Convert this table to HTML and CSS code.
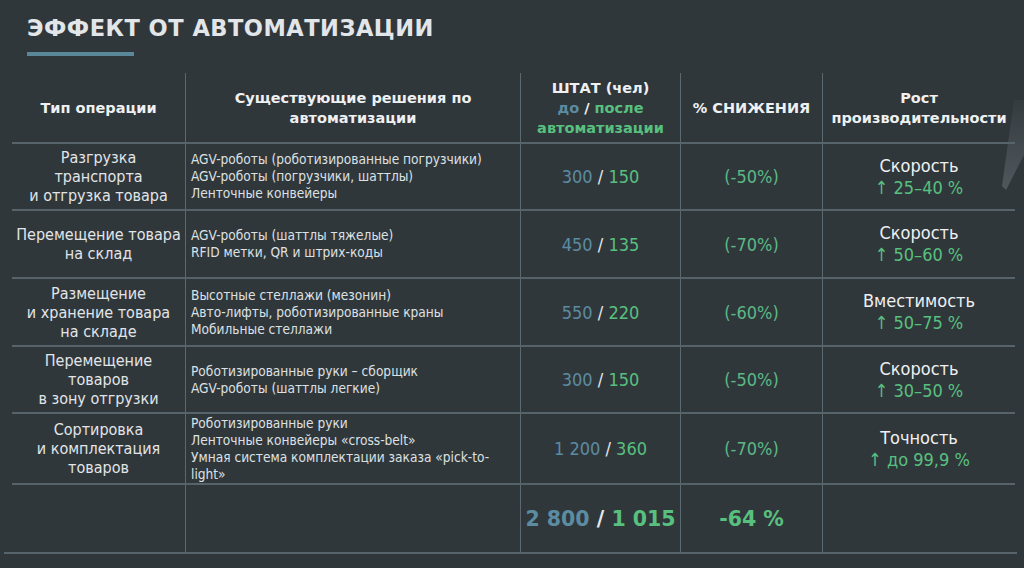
FILE: index.html
```html
<!DOCTYPE html>
<html lang="ru">
<head>
<meta charset="utf-8">
<title>Эффект от автоматизации</title>
<link rel="stylesheet" href="styles.css">
</head>
<body>
<div class="slide">
  <svg class="deco" width="24" height="100" viewBox="0 0 24 100"><defs><linearGradient id="g" x1="0" y1="0" x2="0" y2="1"><stop offset="0" stop-color="#5d666c" stop-opacity="0.1"/><stop offset="1" stop-color="#5d666c" stop-opacity="0.7"/></linearGradient></defs><polygon points="14,0 24,0 24,55 6,90 2,86" fill="url(#g)"/></svg>
  <header class="head">
    <h1 class="title">ЭФФЕКТ ОТ АВТОМАТИЗАЦИИ</h1>
    <div class="title-bar"></div>
  </header>
  <div class="table">
    <div class="cell th first"><div>Тип операции</div></div>
    <div class="cell th"><div>Существующие решения по<br>автоматизации</div></div>
    <div class="cell th"><div>ШТАТ (чел)<br><span class="blue">до</span> / <span class="green">после<br>автоматизации</span></div></div>
    <div class="cell th"><div>% СНИЖЕНИЯ</div></div>
    <div class="cell th"><div>Рост<br>производительности</div></div>

    <div class="cell op first row"><div>Разгрузка<br>транспорта<br>и отгрузка товара</div></div>
    <div class="cell sol row"><div>AGV-роботы (роботизированные погрузчики)<br>AGV-роботы (погрузчики, шаттлы)<br>Ленточные конвейеры</div></div>
    <div class="cell num row"><div><span class="blue">300</span> / <span class="green">150</span></div></div>
    <div class="cell pct row"><div>(-50%)</div></div>
    <div class="cell grow row"><div>Скорость<br><span class="green">↑ 25–40 %</span></div></div>

    <div class="cell op first row"><div>Перемещение товара<br>на склад</div></div>
    <div class="cell sol row"><div>AGV-роботы (шаттлы тяжелые)<br>RFID метки, QR и штрих-коды</div></div>
    <div class="cell num row"><div><span class="blue">450</span> / <span class="green">135</span></div></div>
    <div class="cell pct row"><div>(-70%)</div></div>
    <div class="cell grow row"><div>Скорость<br><span class="green">↑ 50–60 %</span></div></div>

    <div class="cell op first row"><div>Размещение<br>и хранение товара<br>на складе</div></div>
    <div class="cell sol row"><div>Высотные стеллажи (мезонин)<br>Авто-лифты, роботизированные краны<br>Мобильные стеллажи</div></div>
    <div class="cell num row"><div><span class="blue">550</span> / <span class="green">220</span></div></div>
    <div class="cell pct row"><div>(-60%)</div></div>
    <div class="cell grow row"><div>Вместимость<br><span class="green">↑ 50–75 %</span></div></div>

    <div class="cell op first row"><div>Перемещение<br>товаров<br>в зону отгрузки</div></div>
    <div class="cell sol row"><div>Роботизированные руки – сборщик<br>AGV-роботы (шаттлы легкие)</div></div>
    <div class="cell num row"><div><span class="blue">300</span> / <span class="green">150</span></div></div>
    <div class="cell pct row"><div>(-50%)</div></div>
    <div class="cell grow row"><div>Скорость<br><span class="green">↑ 30–50 %</span></div></div>

    <div class="cell op first row"><div>Сортировка<br>и комплектация<br>товаров</div></div>
    <div class="cell sol row"><div>Роботизированные руки<br>Ленточные конвейеры «cross-belt»<br>Умная система комплектации заказа «pick-to-<br>light»</div></div>
    <div class="cell num row"><div><span class="blue">1 200</span> / <span class="green">360</span></div></div>
    <div class="cell pct row"><div>(-70%)</div></div>
    <div class="cell grow row"><div>Точность<br><span class="green">↑ до 99,9 %</span></div></div>

    <div class="cell first row"></div>
    <div class="cell row"></div>
    <div class="cell total row"><div><span class="blue">2 800</span> / <span class="green">1 015</span></div></div>
    <div class="cell total row"><div><span class="green">-64 %</span></div></div>
    <div class="cell row"></div>
  </div>
  <div class="bottom-rule"></div>
</div>
</body>
</html>
```

FILE: styles.css
```css
html, body {
  margin: 0;
  padding: 0;
  background: #30373b;
}
.slide {
  position: relative;
  width: 1024px;
  height: 568px;
  overflow: hidden;
  background: #30373b;
  color: #e6e9eb;
  font-family: "DejaVu Sans", Verdana, sans-serif;
}
.deco {
  position: absolute;
  right: 0;
  top: 100px;
}
.head {
  padding: 13px 0 0 27px;
  height: 62px;
  box-sizing: border-box;
}
.title {
  margin: 0;
  font-size: 22.5px;
  line-height: 30px;
  font-weight: bold;
  letter-spacing: 0.5px;
  color: #e3e6e9;
}
.title-bar {
  width: 107px;
  height: 4px;
  margin-top: 9px;
  background: #5a8799;
}
.table {
  position: relative;
  margin: 11px 0 0 12px;
  display: grid;
  grid-template-columns: 173px 335px 160px 142px 193px;
  grid-template-rows: 69px 67px 68px 68px 67px 71px 69px;
}
.cell {
  border-left: 1px solid #5b6870;
  display: flex;
  justify-content: center;
  align-items: center;
  text-align: center;
  box-sizing: border-box;
}
.cell.first {
  border-left: none;
}
.cell.row {
  border-top: 2px solid #56636b;
}
.th {
  font-weight: bold;
  font-size: 14.5px;
  line-height: 20px;
  color: #eef0f2;
}
.op {
  font-family: "DejaVu Sans Condensed", "DejaVu Sans", sans-serif;
  font-size: 16px;
  line-height: 19px;
  color: #e2e5e8;
}
.sol {
  justify-content: flex-start;
  text-align: left;
  padding-left: 5px;
  font-family: "DejaVu Sans Condensed", "DejaVu Sans", sans-serif;
  font-size: 13.6px;
  line-height: 17px;
  color: #dde1e4;
}
.num, .pct, .grow {
  font-family: "DejaVu Sans Condensed", "DejaVu Sans", sans-serif;
  font-size: 18px;
}
.pct {
  color: #5bb985;
}
.grow {
  font-size: 18px;
  line-height: 22px;
  color: #eef0f2;
}
.total {
  font-weight: bold;
  font-size: 20.5px;
}
.blue {
  color: #5b8ca2;
}
.green {
  color: #58c07f;
}
.bottom-rule {
  margin: 0 7px 0 4px;
  height: 2px;
  background: #56636b;
}
```
